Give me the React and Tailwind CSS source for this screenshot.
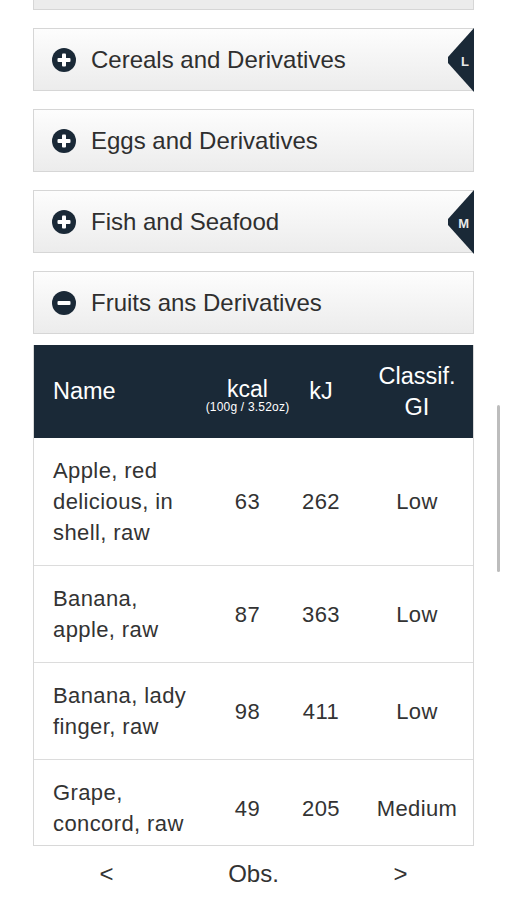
import React from 'react';

const navy = '#1a2937';

const CircleIcon = ({ open }) => (
  <svg width="24" height="24" viewBox="0 0 24 24" className="shrink-0">
    <circle cx="12" cy="12" r="12" fill={navy} />
    <rect x="5.5" y="10" width="13" height="4" rx="1" fill="#fff" />
    {!open && <rect x="10" y="5.5" width="4" height="13" rx="1" fill="#fff" />}
  </svg>
);

const Badge = ({ letter }) => (
  <div className="absolute right-[-1px] top-[-1px] h-[64px] w-[27px]">
    <svg width="27" height="64" viewBox="0 0 27 64" className="absolute right-0 top-0">
      <polygon points="27,0 1,29 1,35 27,64" fill={navy} />
    </svg>
    <span className="absolute right-[5px] top-[27px] text-[13px] font-bold leading-none text-[#e8e8e8]">
      {letter}
    </span>
  </div>
);

const Category = ({ title, open, badge }) => (
  <div className="relative flex h-[63px] items-center gap-[15px] border border-[#d6d6d6] bg-gradient-to-b from-[#fdfdfd] to-[#ececec] pl-[18px]">
    <CircleIcon open={open} />
    <span className="text-[24px] text-[#2f2f2f]">{title}</span>
    {badge && <Badge letter={badge} />}
  </div>
);

const rows = [
  { name: ['Apple, red', 'delicious, in', 'shell, raw'], kcal: 63, kj: 262, gi: 'Low' },
  { name: ['Banana,', 'apple, raw'], kcal: 87, kj: 363, gi: 'Low' },
  { name: ['Banana, lady', 'finger, raw'], kcal: 98, kj: 411, gi: 'Low' },
  { name: ['Grape,', 'concord, raw'], kcal: 49, kj: 205, gi: 'Medium' },
];

export default function App() {
  return (
    <div
      className="relative h-[900px] w-[506px] overflow-hidden bg-white"
      style={{ fontFamily: '"Liberation Sans", Arial, sans-serif' }}
    >
      <div className="flex flex-col px-[33px] pr-[32px]">
        <div className="h-[10px] border-x border-b border-[#d6d6d6] bg-[#ececec]" />
        <div className="mt-[18px] flex flex-col gap-[18px]">
          <Category title="Cereals and Derivatives" badge="L" />
          <Category title="Eggs and Derivatives" />
          <Category title="Fish and Seafood" badge="M" />
          <Category title="Fruits ans Derivatives" open />
        </div>

        <div className="mt-[11px] h-[501px] overflow-hidden border-x border-b border-[#d8d8d8]">
          <div className="grid h-[93px] grid-cols-[180px_67px_80px_1fr] items-center bg-[#1a2937] text-white">
            <div className="pl-[19px] text-[23.5px]">Name</div>
            <div className="mt-[8px] flex flex-col items-center">
              <span className="text-[23px] leading-[22px]">kcal</span>
              <span className="whitespace-nowrap text-[12px] leading-[14px] tracking-[0.2px]">(100g / 3.52oz)</span>
            </div>
            <div className="text-center text-[23.5px]">kJ</div>
            <div className="text-center text-[23.5px] leading-[31px]">
              Classif.
              <br />
              GI
            </div>
          </div>
          {rows.map((r, i) => (
            <div
              key={i}
              className="grid grid-cols-[180px_67px_80px_1fr] items-center border-b border-[#dcdcdc] py-[17px] text-[22px] leading-[31px] tracking-[0.4px] text-[#333]"
            >
              <div className="whitespace-nowrap pl-[19px]">
                {r.name.map((l, j) => (
                  <div key={j}>{l}</div>
                ))}
              </div>
              <div className="text-center">{r.kcal}</div>
              <div className="text-center">{r.kj}</div>
              <div className="text-center">{r.gi}</div>
            </div>
          ))}
        </div>

        <div className="grid h-[55px] grid-cols-3 items-center text-center text-[24px] text-[#333]">
          <span>&lt;</span>
          <span>Obs.</span>
          <span>&gt;</span>
        </div>
      </div>

      <div className="absolute left-[497px] top-[405px] h-[167px] w-[3px] rounded-full bg-[#bdbdbd]" />
    </div>
  );
}
